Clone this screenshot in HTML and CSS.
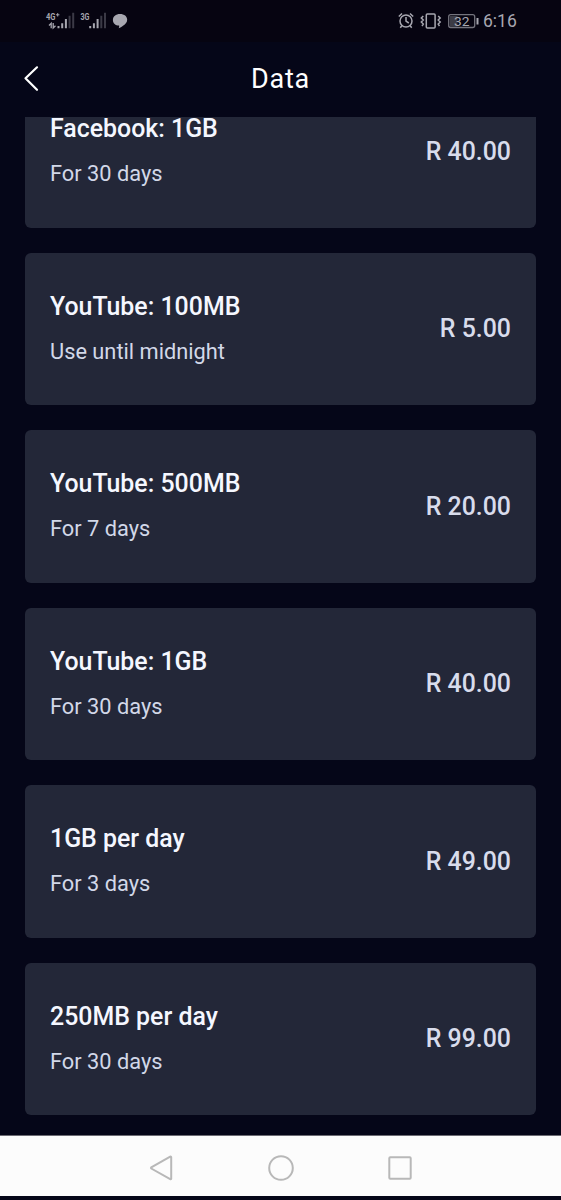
FILE: index.html
```html
<!DOCTYPE html>
<html lang="en">
<head>
<meta charset="utf-8">
<title>Data</title>
<link rel="stylesheet" href="styles.css">
</head>
<body>
<div class="status">
  <svg class="signals" width="84" height="22" viewBox="0 0 84 22">
    <g class="bars">
      <path d="M13.500 18.200v-2.200M17.200 18.200v-5M20.900 18.200v-9.200M45.200 18.200v-2.200M48.900 18.200v-5M52.600 18.200v-9.200"/>
      <path class="dim" d="M24.600 18.200v-12.500M28.200 18.200v-15.500M56.300 18.200v-12.500M60 18.200v-15.500"/>
    </g>
    <path class="arrows" d="M4 15.500l2.200-2.200v5M8.200 13v5l2.300-2.200"/>
    <text x="1" y="10" textLength="9.500" lengthAdjust="spacingAndGlyphs">4G</text>
    <path class="plus" d="M11 4.800h3.400M12.700 3.100v3.400"/>
    <text x="35.500" y="10" textLength="9" lengthAdjust="spacingAndGlyphs">3G</text>
    <path class="bubble" d="M75 4c4.300 0 7.200 2.400 7.200 5.700 0 2.900-2.200 4.600-4.200 6.100-1.200.9-2.700 2.100-4.300 2.500.5-1 .6-1.900.4-2.700-3.700 0-6.200-2.400-6.200-5.700C67.900 6.400 70.800 4 75 4z"/>
  </svg>
  <svg class="indicators" width="82" height="22" viewBox="0 0 82 22">
    <g class="line">
      <circle cx="9" cy="11" r="6"/>
      <path d="M9 7v4.200l2.800 1.800M1.800 6.500l3.200-3M16.200 6.500l-3.200-3M5 15.500l-1.700 2.200M13 15.500l1.700 2.200"/>
      <rect x="29.300" y="4" width="8.800" height="14" rx="1"/>
      <path d="M26.300 6l-2 2 2 2-2 2 2 2-1.300 2M41.200 6l2 2-2 2 2 2-2 2 1.300 2"/>
    </g>
    <rect class="charge" x="53" y="6" width="7.500" height="10.500"/>
    <rect class="battery" x="51.700" y="4.700" width="26" height="12.800" rx="2"/>
    <path class="tip" d="M80.500 8v6.500"/>
    <text class="level" x="57" y="15.600" textLength="15.500" lengthAdjust="spacingAndGlyphs">32</text>
  </svg>
  <span class="clock">6:16</span>
</div>
<header class="header">
  <svg class="back" width="16" height="28" viewBox="0 0 16 28"><path d="M14 2.300L2.500 13.300l11.500 11.500"/></svg>
  <h1>Data</h1>
</header>
<main class="list">
  <div class="scroll">
    <section class="card"><div class="plan"><h2>Facebook: 1GB</h2><p>For 30 days</p></div><span class="price">R 40.00</span></section>
    <section class="card"><div class="plan"><h2>YouTube: 100MB</h2><p>Use until midnight</p></div><span class="price">R 5.00</span></section>
    <section class="card"><div class="plan"><h2>YouTube: 500MB</h2><p>For 7 days</p></div><span class="price">R 20.00</span></section>
    <section class="card"><div class="plan"><h2>YouTube: 1GB</h2><p>For 30 days</p></div><span class="price">R 40.00</span></section>
    <section class="card"><div class="plan"><h2>1GB per day</h2><p>For 3 days</p></div><span class="price">R 49.00</span></section>
    <section class="card"><div class="plan"><h2>250MB per day</h2><p>For 30 days</p></div><span class="price">R 99.00</span></section>
  </div>
</main>
<nav class="nav">
  <svg width="28" height="28" viewBox="0 0 28 28"><path d="M23.200 3.100v21.600a.7.7 0 0 1-1 .5L3.300 14.500a.7.7 0 0 1 0-1.100L22.200 2.600a.7.7 0 0 1 1 .5z"/></svg>
  <svg width="28" height="28" viewBox="0 0 28 28"><circle cx="14" cy="14" r="11.800"/></svg>
  <svg width="28" height="28" viewBox="0 0 28 28"><rect x="3.300" y="3.300" width="21.400" height="21.400" rx="1"/></svg>
</nav>
</body>
</html>
```
FILE: styles.css
```css
* { box-sizing: border-box; }
body {
  margin: 0;
  height: 1200px;
  overflow: hidden;
  display: flex;
  flex-direction: column;
  background: #050618;
  color: #f5f7ff;
  font-family: Roboto, sans-serif;
}
.status {
  height: 42px;
  flex: none;
  display: flex;
  align-items: center;
  padding: 0 43px 0 45px;
  background: #060411;
  color: #a7a7b0;
}
.bars path { stroke: #a7a7b0; stroke-width: 2; }
.bars .dim { stroke: #3b3a46; }
.arrows { fill: none; stroke: #a7a7b0; stroke-width: 1.3; }
.plus { stroke: #a7a7b0; stroke-width: 1; }
.bubble { fill: #a7a7b0; }
.status text { font: 700 9px Roboto, sans-serif; fill: #a7a7b0; }
.indicators { margin-left: auto; }
.line { fill: none; stroke: #a7a7b0; stroke-width: 1.5px; }
.battery { fill: none; stroke: #74747e; stroke-width: 1.3px; }
.charge { fill: #3c3c46; }
.tip { stroke: #a7a7b0; stroke-width: 2; }
.status .level { font-size: 12.5px; font-weight: 400; }
.clock { width: 35px; margin-left: 4px; font-size: 17.5px; line-height: 22px; }
.header {
  height: 75px;
  flex: none;
  display: grid;
  grid-template-columns: 1fr auto 1fr;
  align-items: center;
  padding: 0 22.5px 2px;
}
.back { fill: none; stroke: #fff; stroke-width: 2.2; stroke-linecap: round; stroke-linejoin: round; }
.header h1 { margin: 0; font-size: 27px; font-weight: 400; letter-spacing: 0.8px; color: #fff; }
.list { height: 1018px; flex: none; overflow: hidden; }
.scroll {
  display: flex;
  flex-direction: column;
  gap: 25px;
  margin-top: -42px;
  padding: 0 25px;
}
.card {
  height: 152.5px;
  flex: none;
  display: flex;
  align-items: center;
  justify-content: space-between;
  padding: 0 25px;
  border-radius: 6px;
  background: #232738;
}
.plan { padding-bottom: 1px; }
.card h2 { margin: 0; font-size: 24.9px; line-height: 30px; font-weight: 500; }
.card p { margin: 16px 0 0; font-size: 21.8px; line-height: 27px; color: #d2d8e8; }
.price { font-size: 24.9px; font-weight: 500; color: #d8dcec; }
.nav {
  height: 61px;
  flex: none;
  display: flex;
  align-items: center;
  justify-content: center;
  gap: 91px;
  padding-top: 4px;
  background: #fcfcfc;
  border-top: 1px solid #6c6b73;
}
.nav svg { fill: none; stroke: #b8b8b8; stroke-width: 2; }
```
